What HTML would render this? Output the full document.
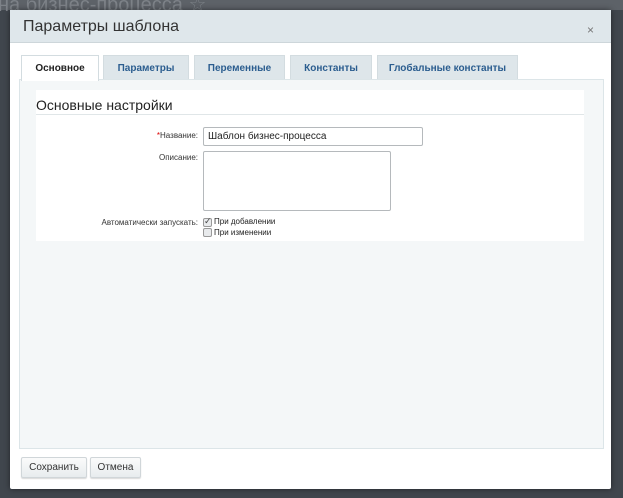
<!DOCTYPE html>
<html><head><meta charset="utf-8"><style>
*{box-sizing:border-box;margin:0;padding:0}
body{width:623px;height:498px;background:#40464d;font-family:"Liberation Sans",sans-serif;position:relative;overflow:hidden}
.bgtop{position:absolute;left:0;top:0;width:623px;height:10px;background:#5d6268}
.bgtxt{position:absolute;left:-2px;top:-8px;font-size:20px;color:#7d8288}
.dlg{position:absolute;left:10px;top:10px;width:601px;height:479px;background:#fff;border-radius:2px;box-shadow:0 0 6px rgba(0,0,0,.5)}
.hd{height:33px;background:#dfe7eb;border-bottom:1px solid #cdd6da;font-size:16px;color:#333;padding:8px 0 0 13px}
.x{position:absolute;right:17px;top:13px;font-size:12px;color:#777}
.tab{position:absolute;top:45px;height:25px;background:#dee6ea;border:1px solid #d3dce0;border-bottom:none;font-size:10px;font-weight:bold;color:#2b5d8f;text-align:center;line-height:25px}
.tab.a{background:#fff;color:#222;height:26px;z-index:2}
.panel{position:absolute;left:9px;top:69px;width:585px;height:370px;background:#f4f7f8;border:1px solid #dce5e8}
.inner{position:absolute;left:16px;top:10px;width:548px;height:151px;background:#fff}
.ttl{font-size:14px;color:#222;padding:7px 0 0 0;height:25px;border-bottom:1px solid #e0e6e8}
.lbl{position:absolute;font-size:8px;color:#333;text-align:right;width:170px}
.inp{position:absolute;border:1px solid #b5b9bc;border-radius:2px;background:#fff;font-size:10px;color:#222;padding:3px 4px}
.cb{position:absolute;width:9px;height:9px;border:1px solid #999;border-radius:2px;background:#e8eaec}
.btn{position:absolute;top:447px;height:21px;border:1px solid #d0d6d9;border-radius:2px;background:linear-gradient(#fbfbfb,#e8ecee);font-size:10px;color:#333;text-align:center;line-height:19px;box-shadow:0 1px 1px rgba(0,0,0,.15)}
</style></head><body>
<div class="bgtop"></div><div class="bgtxt">на бизнес-процесса ☆</div>
<div class="dlg">
<div class="hd">Параметры шаблона</div><div class="x">×</div>
<div class="tab a" style="left:11px;width:78px">Основное</div>
<div class="tab" style="left:93px;width:86px">Параметры</div>
<div class="tab" style="left:184px;width:91px">Переменные</div>
<div class="tab" style="left:280px;width:82px">Константы</div>
<div class="tab" style="left:367px;width:141px">Глобальные константы</div>
<div class="panel">
<div class="inner"><div class="ttl">Основные настройки</div></div>
</div>
<div class="lbl" style="left:18px;top:121px"><span style="color:#d00">*</span>Название:</div>
<div class="inp" style="left:193px;top:117px;width:220px;height:19px">Шаблон бизнес-процесса</div>
<div class="lbl" style="left:18px;top:143px">Описание:</div>
<div class="inp" style="left:193px;top:141px;width:188px;height:60px"></div>
<div class="lbl" style="left:18px;top:208px">Автоматически запускать:</div>
<div class="cb" style="left:193px;top:208px"><span style="position:absolute;left:0;top:-3px;font-size:9px;color:#444">✓</span></div>
<div class="cb" style="left:193px;top:218px"></div>
<div style="position:absolute;left:204px;top:207px;font-size:8px;color:#222">При добавлении</div>
<div style="position:absolute;left:204px;top:218px;font-size:8px;color:#222">При изменении</div>
<div class="btn" style="left:11px;width:66px">Сохранить</div>
<div class="btn" style="left:80px;width:51px">Отмена</div>
</div>
</body></html>
